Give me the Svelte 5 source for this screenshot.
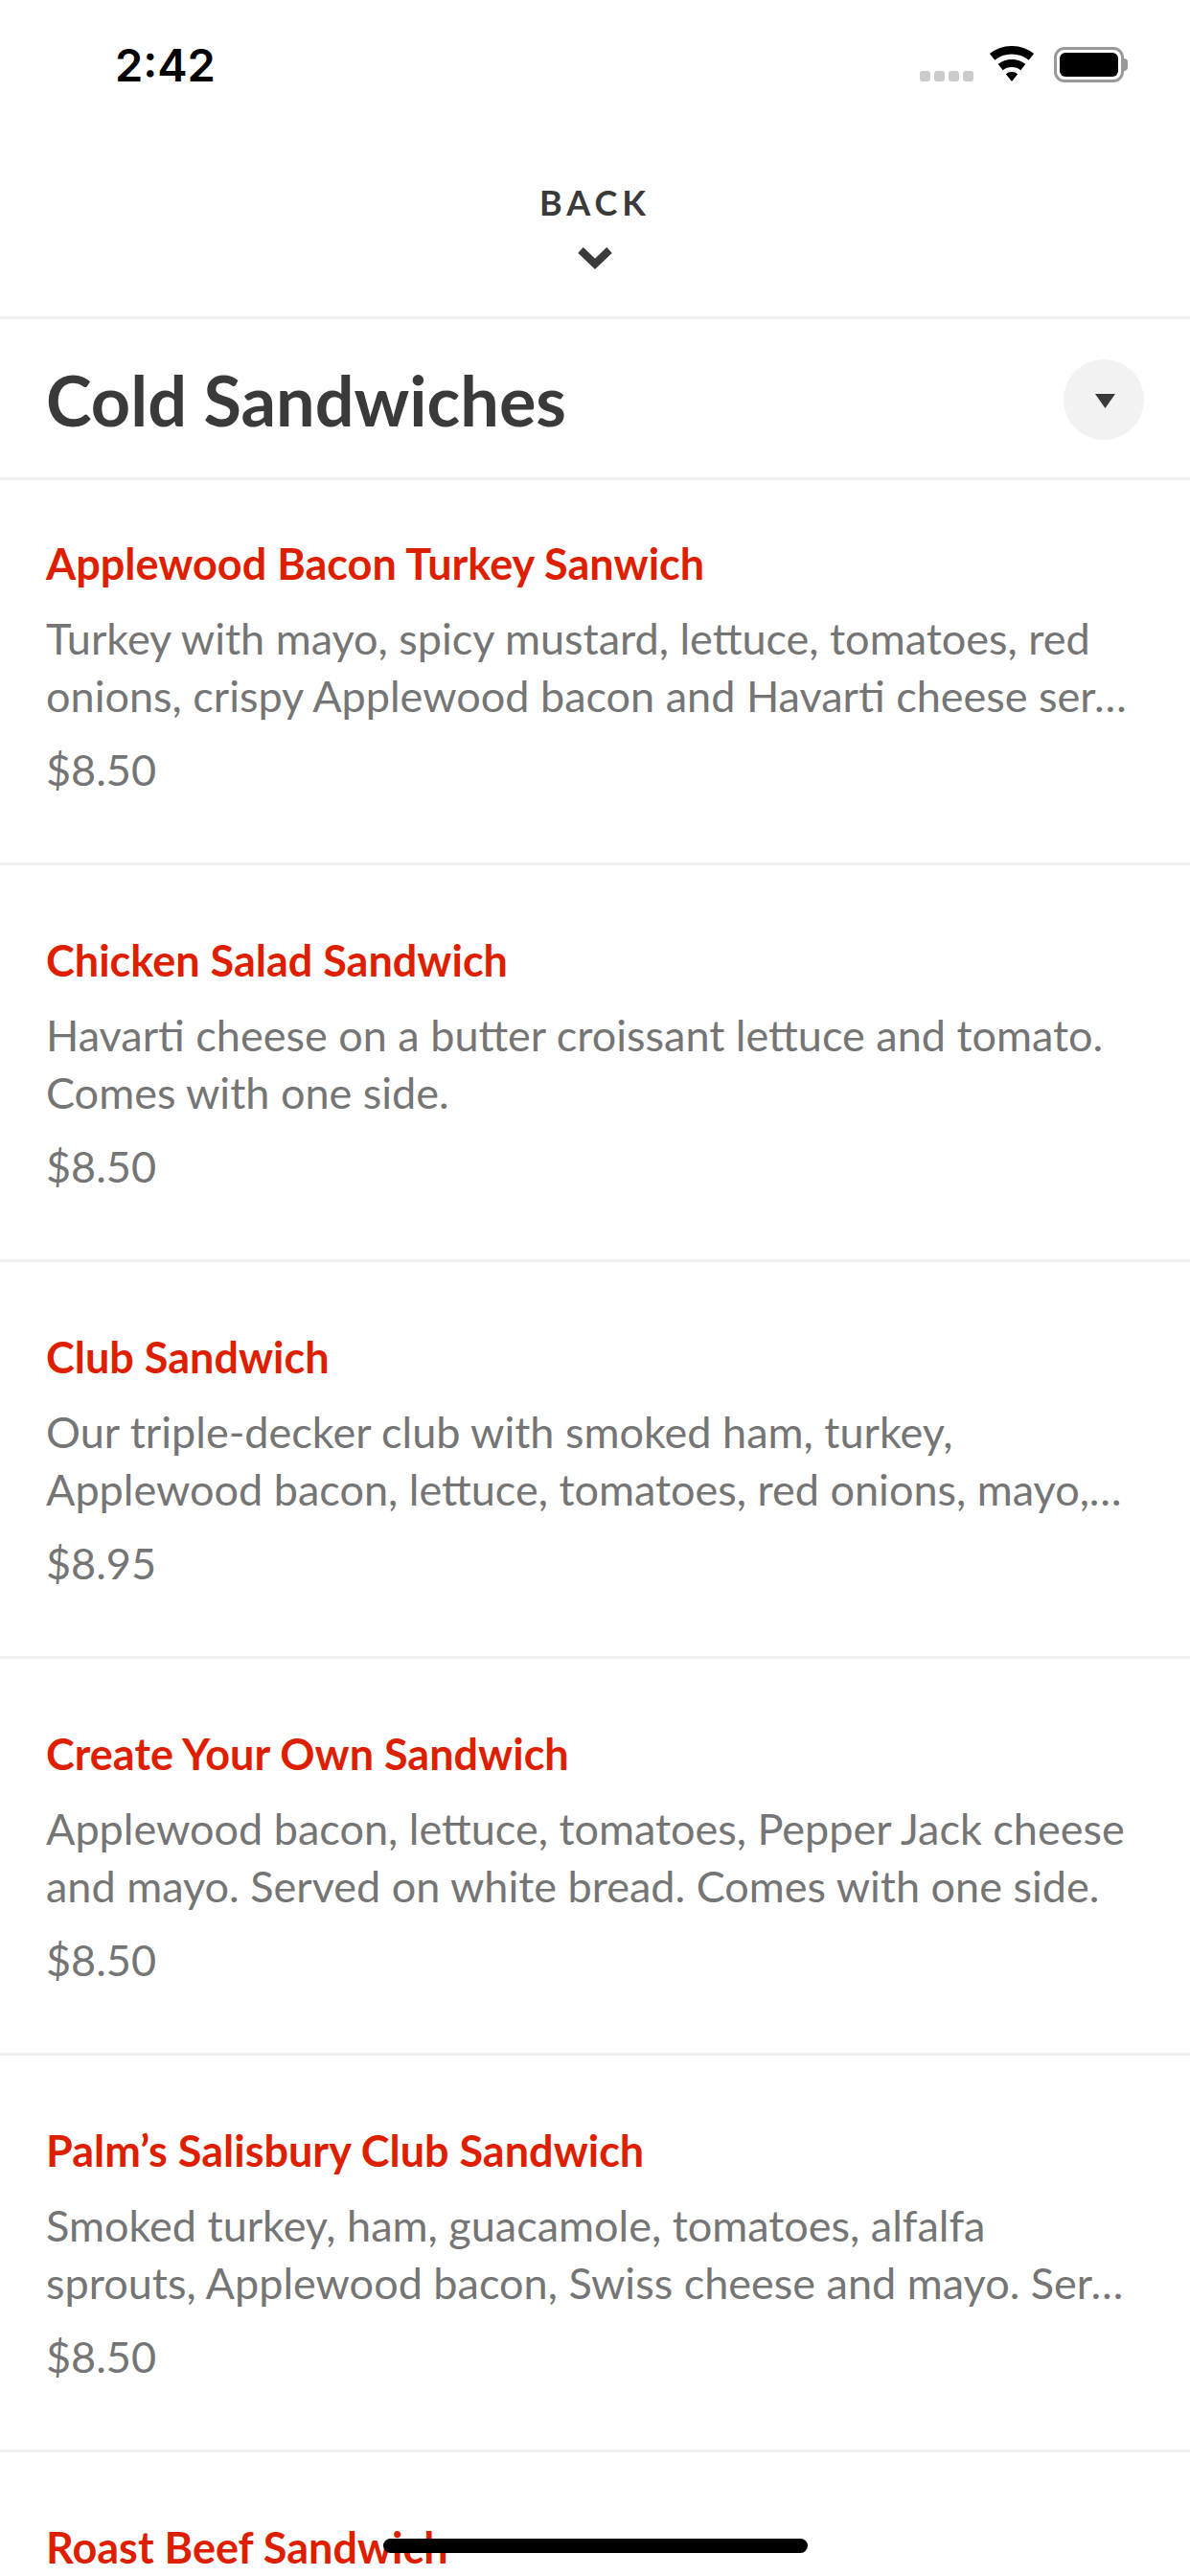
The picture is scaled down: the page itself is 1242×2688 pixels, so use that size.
<script>
  const items = [
    {
      name: 'Applewood Bacon Turkey Sanwich',
      desc: 'Turkey with mayo, spicy mustard, lettuce, tomatoes, red onions, crispy Applewood bacon and Havarti cheese ser…',
      price: '$8.50'
    },
    {
      name: 'Chicken Salad Sandwich',
      desc: 'Havarti cheese on a butter croissant lettuce and tomato. Comes with one side.',
      price: '$8.50'
    },
    {
      name: 'Club Sandwich',
      desc: 'Our triple-decker club with smoked ham, turkey, Applewood bacon, lettuce, tomatoes, red onions, mayo,…',
      price: '$8.95'
    },
    {
      name: 'Create Your Own Sandwich',
      desc: 'Applewood bacon, lettuce, tomatoes, Pepper Jack cheese and mayo. Served on white bread. Comes with one side.',
      price: '$8.50'
    },
    {
      name: 'Palm’s Salisbury Club Sandwich',
      desc: 'Smoked turkey, ham, guacamole, tomatoes, alfalfa sprouts, Applewood bacon, Swiss cheese and mayo. Ser…',
      price: '$8.50'
    },
    {
      name: 'Roast Beef Sandwich',
      desc: 'Roast beef with lettuce, tomatoes, red onions and mayo. Comes with one side.',
      price: '$8.50'
    }
  ];
</script>

<div class="screen">
  <div class="status">
    <span class="time">2:42</span>
    <div class="status-icons">
      <div class="dots">
        <i></i><i></i><i></i><i></i>
      </div>
      <svg class="wifi" width="46" height="37" viewBox="0 0 46 37">
        <path d="M0 8A37 37 0 0 1 46 8L40.700 14.700A28.500 28.500 0 0 0 5.300 14.700Z" fill="#000" />
        <path d="M8.700 19A23 23 0 0 1 37.300 19L32.300 25.300A15 15 0 0 0 13.700 25.300Z" fill="#000" />
        <path d="M16.800 29.200A10 10 0 0 1 29.200 29.200L23 37Z" fill="#000" />
      </svg>
      <div class="battery">
        <div class="battery-body"><div class="battery-fill"></div></div>
        <div class="battery-cap"></div>
      </div>
    </div>
  </div>

  <div class="back">
    <span class="back-label">BACK</span>
    <svg width="36" height="24" viewBox="0 0 36 24">
      <path d="M3 3L18 17.500L33 3" fill="none" stroke="#3a3a3a" stroke-width="8" />
    </svg>
  </div>

  <div class="heading">
    <h1>Cold Sandwiches</h1>
    <div class="toggle">
      <svg width="21" height="15" viewBox="0 0 21 15">
        <path d="M0 0H21L10.500 15Z" fill="#3a3a3a" />
      </svg>
    </div>
  </div>

  <div class="list">
    {#each items as item}
      <div class="item">
        <div class="name">{item.name}</div>
        <div class="desc">{item.desc}</div>
        <div class="price">{item.price}</div>
      </div>
    {/each}
  </div>

  <div class="home-bar"></div>
</div>

<style>
  :global(body) {
    margin: 0;
    background: #fff;
  }
  .screen {
    position: relative;
    width: 1242px;
    height: 2688px;
    overflow: hidden;
    background: #fff;
    font-family: Lato, "Open Sans", sans-serif;
  }

  .status {
    height: 132px;
    display: flex;
    align-items: flex-start;
    justify-content: space-between;
    padding: 0 65px 0 120px;
  }
  .time {
    margin-top: 39px;
    font-family: Inter, sans-serif;
    font-size: 47px;
    line-height: 57px;
    font-weight: 600;
    color: #000;
  }
  .status-icons {
    display: flex;
    align-items: flex-end;
    height: 38px;
    margin-top: 48px;
  }
  .dots {
    display: flex;
    gap: 4px;
    margin-right: 17px;
    margin-bottom: 1px;
  }
  .dots i {
    width: 11px;
    height: 11px;
    border-radius: 3px;
    background: #ccc;
  }
  .wifi {
    margin-right: 21px;
    margin-bottom: 1px;
  }
  .battery {
    display: flex;
    align-items: center;
  }
  .battery-body {
    box-sizing: border-box;
    width: 73px;
    height: 37px;
    border: 3px solid #999;
    border-radius: 11px;
    padding: 3px;
    background: #fff;
  }
  .battery-fill {
    width: 100%;
    height: 100%;
    background: #000;
    border-radius: 6px;
  }
  .battery-cap {
    width: 4px;
    height: 13px;
    background: #999;
    border-radius: 0 4px 4px 0;
  }

  .back {
    height: 201px;
    box-sizing: border-box;
    border-bottom: 3px solid #f0f0f0;
    display: flex;
    flex-direction: column;
    align-items: center;
  }
  .back-label {
    margin-top: 57px;
    font-size: 36px;
    line-height: 44px;
    font-weight: 700;
    letter-spacing: 5px;
    color: #3a3a3a;
  }
  .back svg {
    margin-top: 25px;
  }

  .heading {
    height: 168px;
    box-sizing: border-box;
    border-bottom: 3px solid #f0f0f0;
    display: flex;
    align-items: center;
    justify-content: space-between;
    padding: 2px 48px 0;
  }
  h1 {
    margin: 0;
    font-size: 72px;
    line-height: 88px;
    font-weight: 700;
    color: #3a3a3a;
  }
  .toggle {
    width: 84px;
    height: 84px;
    border-radius: 50%;
    background: #f2f2f2;
    display: flex;
    align-items: center;
    justify-content: center;
  }
  .toggle svg {
    margin: 3px 0 0 3px;
  }

  .item {
    box-sizing: border-box;
    height: 414px;
    padding: 71px 48px 0;
    border-bottom: 3px solid #f0f0f0;
  }
  .item:first-child {
    height: 402px;
    padding-top: 59px;
  }
  .name {
    font-size: 45px;
    line-height: 56px;
    font-weight: 700;
    color: #dd1f00;
  }
  .desc {
    margin-top: 20px;
    font-size: 45px;
    line-height: 60px;
    color: #757575;
  }
  .price {
    margin-top: 19px;
    font-size: 45px;
    line-height: 56px;
    color: #757575;
  }

  .home-bar {
    position: absolute;
    left: 400px;
    bottom: 24px;
    width: 443px;
    height: 15px;
    border-radius: 8px;
    background: #000;
  }
</style>
